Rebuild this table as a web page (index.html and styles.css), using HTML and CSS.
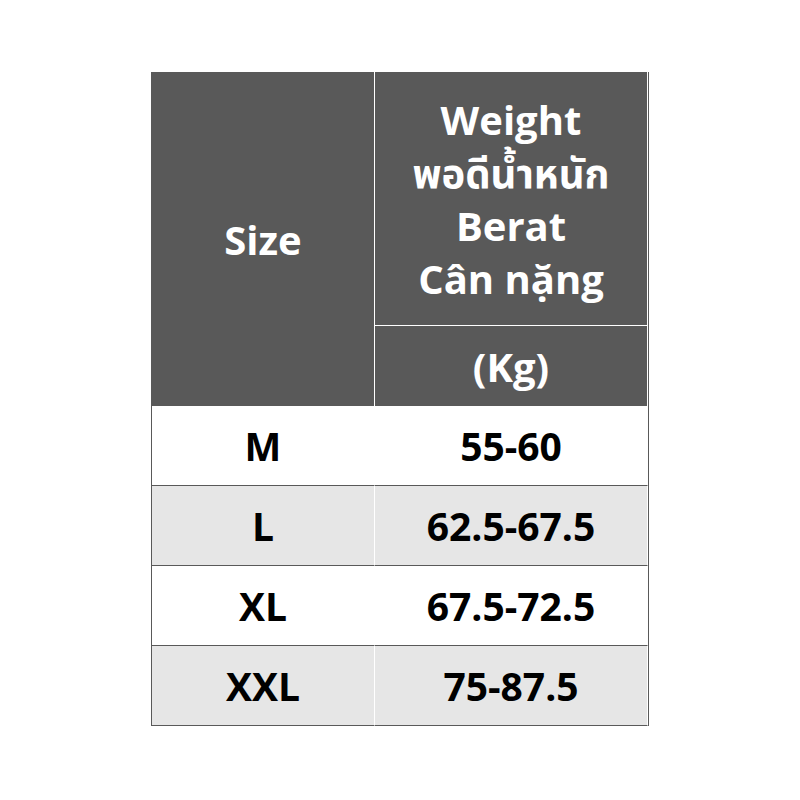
FILE: index.html
```html
<!DOCTYPE html>
<html lang="en">
<head>
<meta charset="utf-8">
<title>Size chart</title>
<link rel="stylesheet" href="styles.css">
</head>
<body>
<table class="size-table">
  <tr class="head">
    <td class="c1 size-head" rowspan="2">Size</td>
    <td class="c2 weight-head">Weight<br>พอดีน้ำหนัก<br>Berat<br>Cân nặng</td>
  </tr>
  <tr class="head">
    <td class="c2 unit">(Kg)</td>
  </tr>
  <tr class="row">
    <td class="c1">M</td><td class="c2">55-60</td>
  </tr>
  <tr class="row alt">
    <td class="c1">L</td><td class="c2">62.5-67.5</td>
  </tr>
  <tr class="row">
    <td class="c1">XL</td><td class="c2">67.5-72.5</td>
  </tr>
  <tr class="row alt">
    <td class="c1">XXL</td><td class="c2">75-87.5</td>
  </tr>
</table>
</body>
</html>
```
FILE: styles.css
```css
html, body {
  margin: 0;
  padding: 0;
  background: #ffffff;
}

.size-table {
  margin: 72px 0 0 151px;
  border-collapse: separate;
  border-spacing: 0;
  border-left: 1px solid #595959;
  border-right: 1px solid #595959;
  font-family: "Open Sans", "Noto Sans", "Noto Sans Thai", "DejaVu Sans", sans-serif;
  font-weight: 700;
  font-size: 39px;
}

.size-table td {
  padding: 0;
  text-align: center;
  vertical-align: middle;
  box-sizing: content-box;
}

.c1 {
  width: 222px;
  border-right: 1px solid #ffffff;
}

.c2 {
  width: 272px;
  border-right: 1px solid #ffffff;
}

.head td {
  background: #595959;
  color: #ffffff;
  font-size: 40px;
}

.size-head {
  height: 333px;
}

.weight-head {
  height: 253px;
  line-height: 53px;
  border-bottom: 1px solid #ffffff;
}

.unit {
  height: 80px;
}

.row td {
  height: 79px;
  color: #000000;
  background: #ffffff;
  border-bottom: 1px solid #595959;
}

.row.alt td {
  background: #e6e6e6;
}
```
